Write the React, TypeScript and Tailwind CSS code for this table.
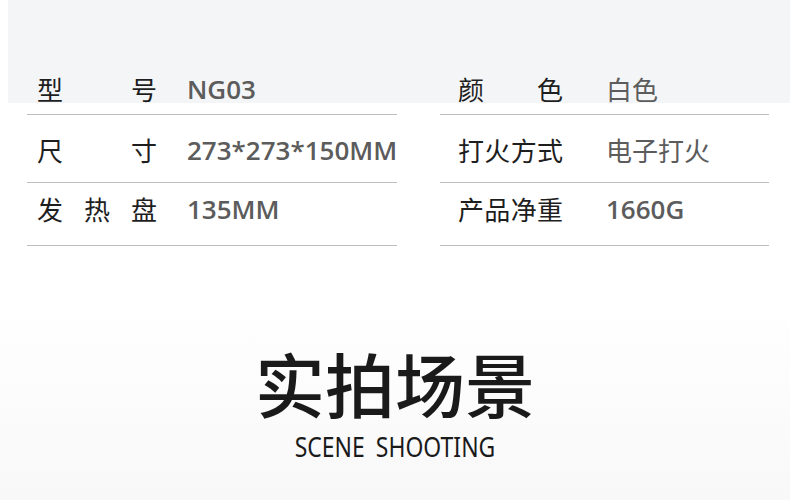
import React from "react";

const cjk = { fontFamily: '"Noto Sans CJK SC", "Noto Sans", sans-serif' };
const valFont = { fontFamily: '"Open Sans", "Noto Sans CJK SC", sans-serif' };

type Row = { label: string[]; value: string; latin?: boolean };

const left: Row[] = [
  { label: ["型", "号"], value: "NG03", latin: true },
  { label: ["尺", "寸"], value: "273*273*150MM", latin: true },
  { label: ["发", "热", "盘"], value: "135MM", latin: true },
];
const right: Row[] = [
  { label: ["颜", "色"], value: "白色" },
  { label: ["打", "火", "方", "式"], value: "电子打火" },
  { label: ["产", "品", "净", "重"], value: "1660G", latin: true },
];

const rowPad = ["pt-[74px] pb-[10px]", "pt-[20px] pb-[17px]", "pt-[11px] pb-[21px]"];

function Table({ rows, labelW, colW, padL }: { rows: Row[]; labelW: string; colW: string; padL: string }) {
  return (
    <div className="flex flex-col">
      {rows.map((r, i) => (
        <div
          key={i}
          className={`flex items-center border-b border-[#bdbdbd] ${rowPad[i]} ${padL}`}
        >
          <div className={`${colW} shrink-0`}>
            <div className={`flex justify-between ${labelW} text-[26px] leading-[30px] text-[#1e1e1e]`}>
              {r.label.map((c, j) => (
                <span key={j}>{c}</span>
              ))}
            </div>
          </div>
          {r.latin ? (
            <div
              className="text-[26px] leading-[30px] font-semibold text-[#5c5c5c] whitespace-nowrap"
              style={valFont}
            >
              {r.value}
            </div>
          ) : (
            <div className="text-[26px] leading-[30px] font-normal text-[#5c5c5c] whitespace-nowrap">
              {r.value}
            </div>
          )}
        </div>
      ))}
    </div>
  );
}

export default function App() {
  return (
    <div
      className="w-[790px] h-[500px] overflow-hidden bg-[linear-gradient(180deg,#ffffff_0%,#ffffff_60%,#f8f8f9_100%)]"
      style={cjk}
    >
      <div className="h-full bg-[linear-gradient(#f4f5f7,#f4f5f7)] bg-no-repeat bg-[length:782px_103px] bg-[position:8px_0px]">
        <div className="grid grid-cols-[370px_329px] gap-x-[43px] pl-[27px]">
          <Table rows={left} labelW="w-[120px]" colW="w-[150px]" padL="pl-[10px]" />
          <Table rows={right} labelW="w-[105px]" colW="w-[148px]" padL="pl-[18px]" />
        </div>
        <div className="flex flex-col items-center pt-[102px]">
          <div className="text-[70px] leading-[70px] font-medium text-[#1a1a1a]">实拍场景</div>
          <div
            className="mt-[14px] text-[27px] leading-[30px] text-[#1a1a1a] [word-spacing:6px] scale-x-[0.85]"
            style={{ fontFamily: '"Noto Sans", sans-serif' }}
          >
            SCENE SHOOTING
          </div>
        </div>
      </div>
    </div>
  );
}
